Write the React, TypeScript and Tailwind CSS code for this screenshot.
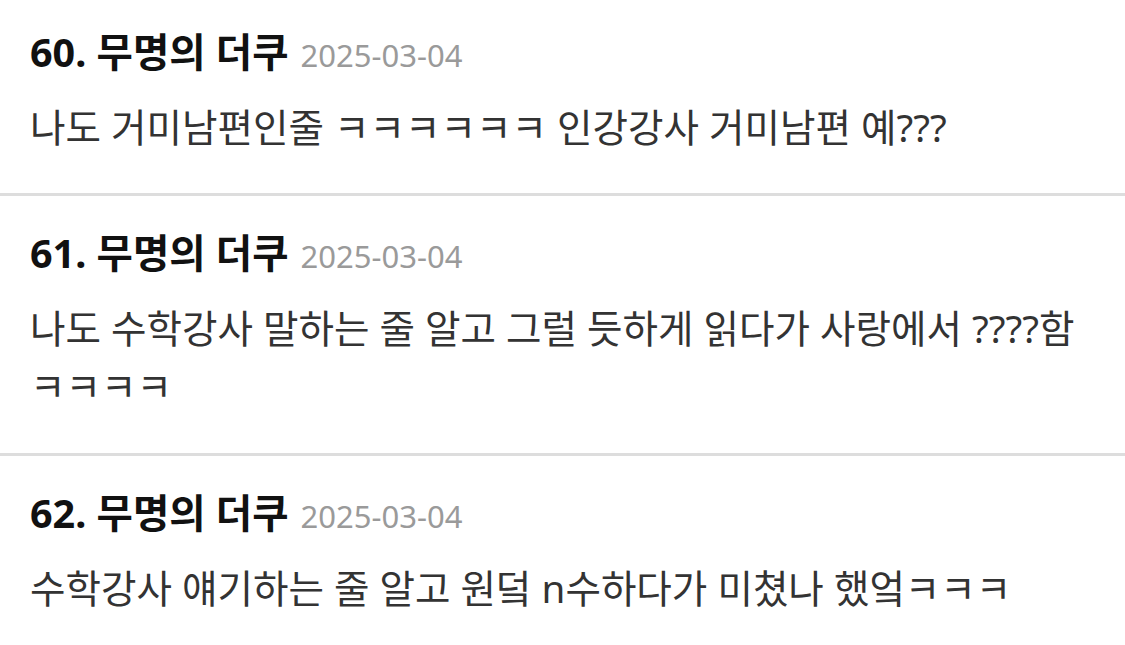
const comments = [
  {
    no: 60,
    name: "무명의 더쿠",
    date: "2025-03-04",
    text: "나도 거미남편인줄 ㅋㅋㅋㅋㅋㅋ 인강강사 거미남편 예???",
  },
  {
    no: 61,
    name: "무명의 더쿠",
    date: "2025-03-04",
    text: "나도 수학강사 말하는 줄 알고 그럴 듯하게 읽다가 사랑에서 ????함 ㅋㅋㅋㅋ",
  },
  {
    no: 62,
    name: "무명의 더쿠",
    date: "2025-03-04",
    text: "수학강사 얘기하는 줄 알고 원덬 n수하다가 미쳤나 했엌ㅋㅋㅋ",
  },
];

export default function App() {
  return (
    <div className="min-h-screen w-full bg-white font-['Noto_Sans','Noto_Sans_CJK_KR',sans-serif]">
      <ul>
        {comments.map((comment, index) => (
          <li
            key={comment.no}
            className={`px-[30px] ${
              index === 0 ? "pt-[30px] pb-[37px]" : "pt-[35px] pb-[38px]"
            } ${
              index < comments.length - 1 ? "border-b-[3px] border-[#dddddd]" : ""
            }`}
          >
            <div className="flex items-baseline gap-[12px] leading-[44px]">
              <span className="text-[39.5px] font-bold text-[#111111]">
                {comment.no}. {comment.name}
              </span>
              <span className="text-[31px] text-[#9a9a9a]">{comment.date}</span>
            </div>
            <p className="mt-[21px] text-[38.6px] leading-[58px] text-[#333333]">
              {comment.text}
            </p>
          </li>
        ))}
      </ul>
    </div>
  );
}
